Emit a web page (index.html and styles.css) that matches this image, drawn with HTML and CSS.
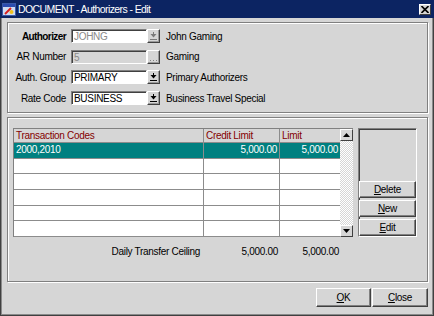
FILE: index.html
```html
<!DOCTYPE html>
<html lang="en">
<head>
    <meta charset="UTF-8">
    <title>DOCUMENT - Authorizers - Edit</title>
    <link rel="stylesheet" href="styles.css">
</head>
<body>
    <div class="window">
        <div class="titlebar">
            <svg class="app-icon" width="14" height="13" viewBox="0 0 14 13">
                <rect x="0.5" y="0.5" width="13" height="12" fill="#cfdcf2" stroke="#3a5aa8"/>
                <rect x="1" y="1" width="12" height="3" fill="#2a4cb0"/>
                <path d="M3 11 L9 5" stroke="#d82020" stroke-width="2"/>
                <circle cx="9.5" cy="9" r="2" fill="#f2c21c"/>
            </svg>
            <span class="title">DOCUMENT - Authorizers - Edit</span>
            <span class="close-btn">
                <svg width="8" height="7" viewBox="0 0 8 7"><path d="M0.5 0 L7.5 7 M7.5 0 L0.5 7" stroke="#000" stroke-width="1.6"/></svg>
            </span>
        </div>

        <div class="content">
            <div class="group fields">
                <div class="row">
                    <span class="lbl bold">Authorizer</span>
                    <div class="input dim">JOHNG</div>
                    <div class="lov"><svg width="7" height="8" viewBox="0 0 7 8"><path d="M3 0h1v2H3z M0.5 2h6L3.5 5.5z M0 7h7v1H0z" fill="#7a7a7a"/></svg></div>
                    <span class="desc">John Gaming</span>
                </div>
                <div class="row">
                    <span class="lbl">AR Number</span>
                    <div class="input dim grey">5</div>
                    <div class="lov dots"><svg width="7" height="2" viewBox="0 0 7 2"><path d="M0 1h1v1H0z M3 1h1v1H3z M6 1h1v1H6z" fill="#808080"/></svg></div>
                    <span class="desc">Gaming</span>
                </div>
                <div class="row">
                    <span class="lbl">Auth. Group</span>
                    <div class="input">PRIMARY</div>
                    <div class="lov"><svg width="7" height="8" viewBox="0 0 7 8"><path d="M3 0h1v2H3z M0.5 2h6L3.5 5.5z M0 7h7v1H0z" fill="#000"/></svg></div>
                    <span class="desc">Primary Authorizers</span>
                </div>
                <div class="row">
                    <span class="lbl">Rate Code</span>
                    <div class="input">BUSINESS</div>
                    <div class="lov"><svg width="7" height="8" viewBox="0 0 7 8"><path d="M3 0h1v2H3z M0.5 2h6L3.5 5.5z M0 7h7v1H0z" fill="#000"/></svg></div>
                    <span class="desc">Business Travel Special</span>
                </div>
            </div>

            <div class="group grid-group">
                <div class="table">
                    <div class="rows">
                        <div class="trow head">
                            <span>Transaction Codes</span><span>Credit Limit</span><span>Limit</span>
                        </div>
                        <div class="trow sel">
                            <span>2000,2010</span><span class="num">5,000.00</span><span class="num">5,000.00</span>
                        </div>
                        <div class="trow"><span></span><span></span><span></span></div>
                        <div class="trow"><span></span><span></span><span></span></div>
                        <div class="trow"><span></span><span></span><span></span></div>
                        <div class="trow"><span></span><span></span><span></span></div>
                        <div class="trow"><span></span><span></span><span></span></div>
                    </div>
                    <div class="scrollbar">
                        <div class="sb-btn"><svg width="7" height="4" viewBox="0 0 7 4"><path d="M3.5 0L7 4H0z"/></svg></div>
                        <div class="sb-track"></div>
                        <div class="sb-btn"><svg width="7" height="4" viewBox="0 0 7 4"><path d="M0 0h7L3.5 4z"/></svg></div>
                    </div>
                </div>

                <div class="side">
                    <button class="btn"><u>D</u>elete</button>
                    <button class="btn"><u>N</u>ew</button>
                    <button class="btn"><u>E</u>dit</button>
                </div>

                <div class="totals">
                    <span>Daily Transfer Ceiling</span><span>5,000.00</span><span>5,000.00</span>
                </div>
            </div>

            <div class="footer">
                <button class="btn ok"><u>O</u>K</button>
                <button class="btn close"><u>C</u>lose</button>
            </div>
        </div>
    </div>
</body>
</html>
```

FILE: styles.css
```css
body { margin: 0; font-family: "Liberation Sans", Arial, sans-serif; font-size: 10px; letter-spacing: -0.3px; color: #000; }

.window { width: 434px; height: 316px; box-sizing: border-box; background: #d6d6d6; border: 1px solid #404040; border-top: none; box-shadow: inset 1px 0 0 #8a8a8a, inset -1px -1px 0 #8a8a8a; display: flex; flex-direction: column; }

.titlebar { height: 18px; margin: 0 -1px; background: #0c2462; color: #fff; display: flex; align-items: center; padding: 0 3px 0 2px; }
.app-icon { flex: none; }
.title { margin-left: 2px; font-size: 10.5px; letter-spacing: -0.6px; }
.close-btn { margin-left: auto; width: 12px; height: 11px; box-sizing: border-box; background: #d6d6d6; border: 1px solid; border-color: #fff #404040 #404040 #fff; display: flex; align-items: center; justify-content: center; }

.content { padding: 4px 5px 0 6px; display: flex; flex-direction: column; }

.group { border: 1px solid #808080; box-shadow: inset 1px 1px 0 #fff, 1px 1px 0 #fff; box-sizing: border-box; }

.fields { height: 91px; padding-top: 6px; display: flex; flex-direction: column; gap: 6.7px; }
.row { display: flex; align-items: center; height: 14px; }
.lbl { width: 58px; margin-right: 5px; text-align: right; white-space: nowrap; }
.bold { font-weight: bold; letter-spacing: -0.6px; }
.input { width: 76px; height: 14px; box-sizing: border-box; border: 1px solid; border-color: #808080 #fff #fff #808080; box-shadow: inset 1px 1px 0 #404040; background: #fff; padding-left: 2px; line-height: 13px; white-space: nowrap; }
.input.dim { color: #8a8a8a; }
.input.grey { background: #d6d6d6; }
.lov { width: 13px; height: 14px; box-sizing: border-box; background: #d6d6d6; border: 1px solid; border-color: #fff #404040 #404040 #fff; box-shadow: inset -1px -1px 0 #9a9a9a; display: flex; align-items: center; justify-content: center; }
.lov.dots { align-items: flex-end; padding-bottom: 2px; }
.desc { margin-left: 6px; white-space: nowrap; }

.grid-group { margin-top: 4px; height: 165px; padding: 10px 0 0 5px; display: grid; grid-template-columns: 340px 59px; column-gap: 5px; grid-template-rows: auto auto; align-content: start; }

.table { display: flex; border-top: 1px solid #808080; border-left: 1px solid #808080; }
.rows { width: 326px; }
.trow { display: grid; grid-template-columns: 190px 76px 60px; height: 15.7px; box-sizing: border-box; border-bottom: 1px solid #8c8c8c; background: #fff; align-items: center; }
.trow span { height: 100%; box-sizing: border-box; padding: 0 2px; line-height: 14.7px; white-space: nowrap; }
.trow span:not(:last-child) { border-right: 1px solid #8c8c8c; }
.trow.head { height: 14px; background: #d6d6d6; color: #840000; }
.trow.head span { line-height: 13px; }
.trow.sel { background: #008080; color: #fff; }
.num { text-align: right; }

.scrollbar { width: 13px; display: flex; flex-direction: column; }
.sb-btn { height: 12px; box-sizing: border-box; background: #d6d6d6; border: 1px solid; border-color: #fff #404040 #404040 #fff; display: flex; align-items: center; justify-content: center; }
.sb-track { flex: 1; background-color: #ebebeb; background-image: conic-gradient(#fff 25%, #d6d6d6 0 50%, #fff 0 75%, #d6d6d6 0); background-size: 2px 2px; }

.side { height: 109px; box-sizing: border-box; border: 1px solid; border-color: #808080 #fff #fff #808080; box-shadow: inset 1px 1px 0 #404040; display: flex; flex-direction: column; justify-content: flex-end; gap: 2px; }

.btn { height: 17px; padding: 0; box-sizing: border-box; background: #d6d6d6; border: 1px solid; border-color: #fff #404040 #404040 #fff; box-shadow: inset -1px -1px 0 #808080; font: inherit; letter-spacing: inherit; color: #000; display: flex; align-items: center; justify-content: center; }

.totals { margin: 8px 0 0 1px; display: grid; grid-template-columns: 190px 76px 60px; height: 13px; line-height: 13px; text-align: right; }
.totals span:nth-child(1) { padding-right: 4px; }
.totals span:nth-child(2) { padding-right: 2px; }
.totals span:nth-child(3) { padding-right: 1px; }

.footer { display: flex; justify-content: flex-end; margin-top: 6px; }
.footer .btn { height: 19px; }
.ok { width: 55px; margin-right: 1px; }
.close { width: 56px; }
```
